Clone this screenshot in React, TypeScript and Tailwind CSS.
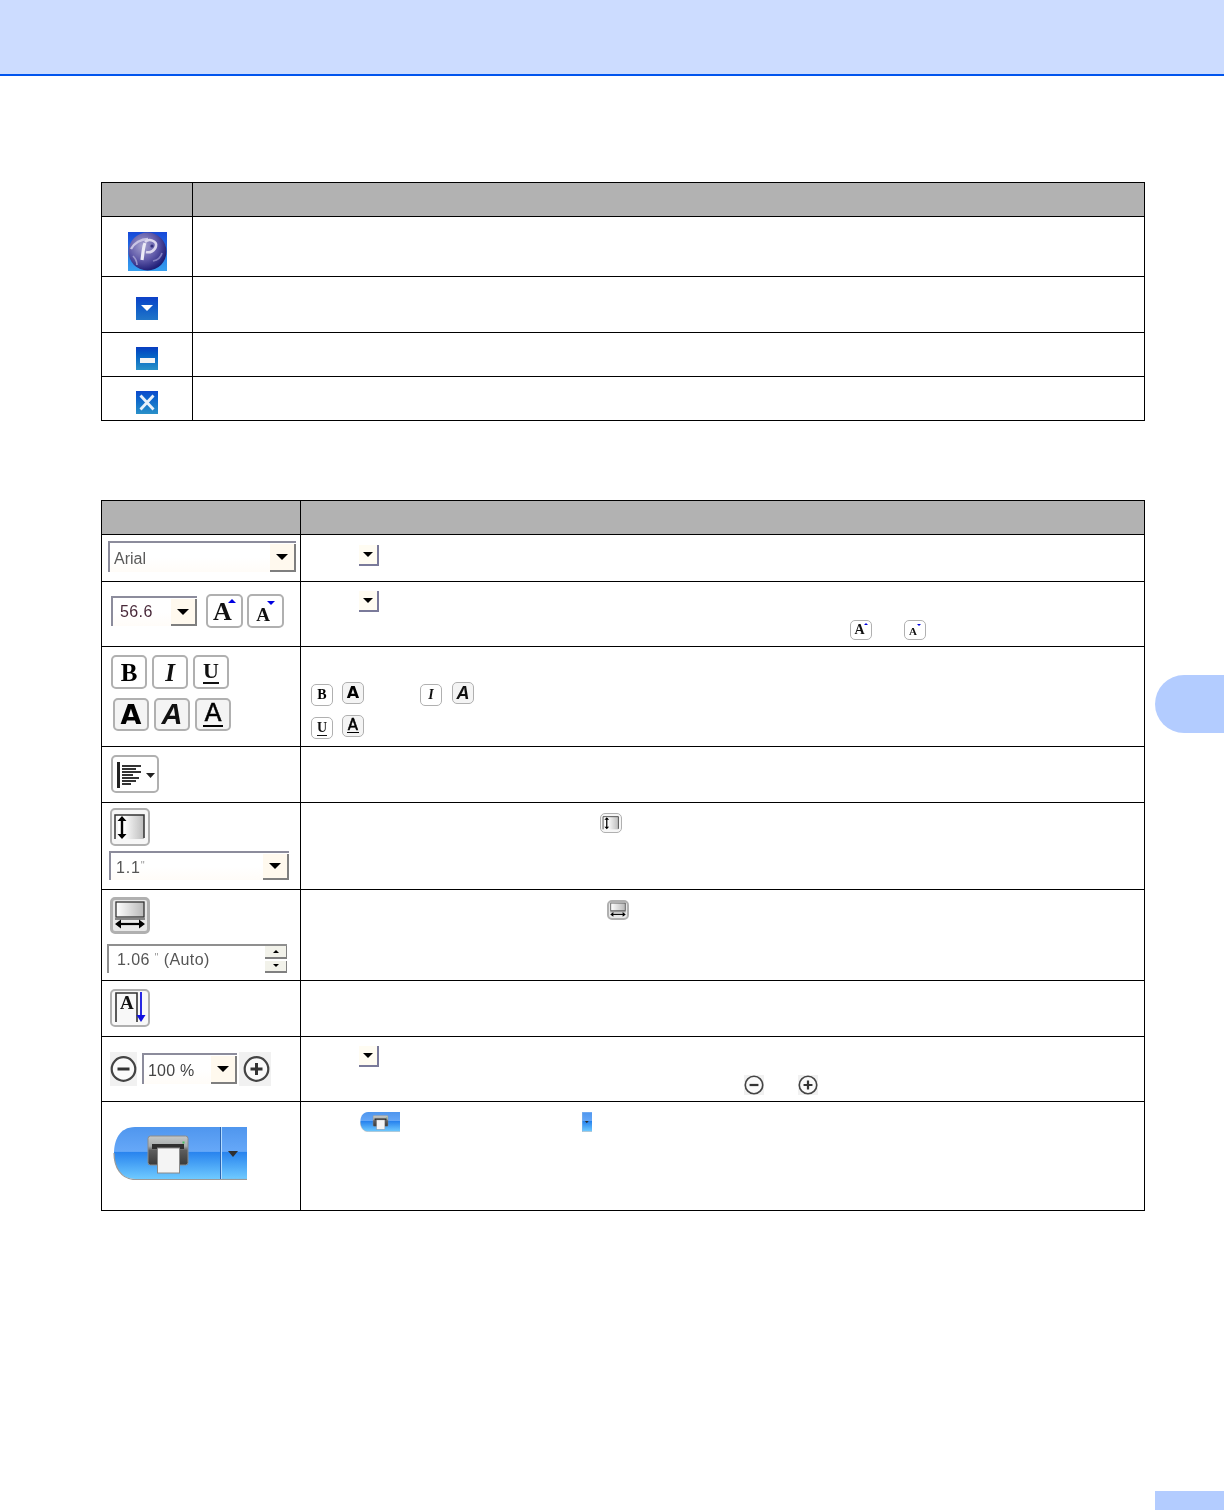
import type { ReactNode } from "react";

const serif = "font-['Liberation_Serif',serif]";
const sans = "font-['Liberation_Sans',sans-serif]";
const dejavu = "font-['DejaVu_Sans',sans-serif]";

function Caret({ className = "border-x-[5px] border-t-[5px] border-t-black" }: { className?: string }) {
	return <span className={`block h-0 w-0 border-x-transparent ${className}`} />;
}

function MiniDrop() {
	return (
		<div className="flex h-[21px] w-[20px] items-center justify-center border-r-2 border-b-2 border-[#7a7a9a] bg-[#fffcf2] blur-[0.3px]">
			<Caret />
		</div>
	);
}

function Combo({ value, className, textClass }: { value: ReactNode; className: string; textClass: string }) {
	return (
		<div className={`flex border-t-2 border-l-2 border-[#8c8c9c] bg-gradient-to-b from-white via-white to-[#fffcf8] blur-[0.35px] ${className}`}>
			<span className={`flex-1 text-[16px] leading-none ${sans} ${textClass}`}>{value}</span>
			<div className="mt-[1px] flex w-[26px] items-center justify-center border-r-2 border-b-2 border-[#7f7f7f] bg-[#fff9ee]">
				<Caret className="border-x-[6px] border-t-[6px] border-t-black" />
			</div>
		</div>
	);
}

function Btn({ className, children }: { className: string; children: ReactNode }) {
	return <div className={`flex items-center justify-center rounded-[5px] border-[#b0b0b0] blur-[0.35px] ${className}`}>{children}</div>;
}

function Bold({ big }: { big?: boolean }) {
	return <span className={`font-bold leading-none text-black ${serif} ${big ? "text-[25px]" : "text-[14px]"}`}>B</span>;
}
function Italic({ big }: { big?: boolean }) {
	return <span className={`font-bold italic leading-none text-[#111] ${serif} ${big ? "text-[25px]" : "text-[14px]"}`}>I</span>;
}
function Under({ big }: { big?: boolean }) {
	return (
		<span className={`font-bold leading-none text-[#111] ${serif} ${big ? "border-b-2 text-[22px]" : "border-b text-[14px]"} border-[#111]`}>U</span>
	);
}
function WideA({ big }: { big?: boolean }) {
	return <span className={`font-bold leading-none text-black ${dejavu} ${big ? "text-[27px]" : "text-[16px]"}`}>A</span>;
}
function SlantA({ big }: { big?: boolean }) {
	return <span className={`font-bold italic leading-none text-[#111] ${sans} ${big ? "text-[29px]" : "text-[18px]"}`}>A</span>;
}
function LineA({ big }: { big?: boolean }) {
	return (
		<span
			className={`leading-[0.9] text-black [-webkit-text-stroke:0.5px_black] ${dejavu} ${big ? "border-b-2 px-[1px] text-[25px]" : "border-b px-[1px] text-[15px]"} border-black`}
		>
			A
		</span>
	);
}

function SizeA({ text, tri }: { text: string; tri: string }) {
	return (
		<div className="flex items-start">
			<span className={`font-bold leading-none text-[#111] ${serif} ${text}`}>A</span>
			<Caret className={tri} />
		</div>
	);
}

function HeightIcon() {
	return (
		<svg viewBox="2 2 36 34" className="h-full w-full">
			<defs>
				<linearGradient id="hg" x1="0" x2="1" y1="0" y2="0">
					<stop offset="0.2" stopColor="#fff" />
					<stop offset="1" stopColor="#bcbcbc" />
				</linearGradient>
			</defs>
			<rect x="8" y="7" width="26" height="24" fill="url(#hg)" />
			<path d="M5 31V7H34V30" fill="none" stroke="#333" strokeWidth="1.5" />
			<path d="M12 10V29" stroke="#000" strokeWidth="2.4" />
			<path d="M7.5 13L12 8L16.5 13ZM7.5 26L12 31L16.5 26Z" fill="#000" />
		</svg>
	);
}

function WidthIcon() {
	return (
		<svg viewBox="3 3 34 31" className="h-full w-full">
			<defs>
				<linearGradient id="wg" x1="0" x2="1" y1="0" y2="0">
					<stop offset="0" stopColor="#fff" />
					<stop offset="1" stopColor="#b8b8b8" />
				</linearGradient>
			</defs>
			<rect x="6" y="5" width="28" height="15" fill="url(#wg)" stroke="#333" strokeWidth="1.3" />
			<path d="M5 22H35" stroke="#444" strokeWidth="1.2" />
			<path d="M9 27H31" stroke="#000" strokeWidth="2.2" />
			<path d="M11 22.5L5 27L11 31.5ZM29 22.5L35 27L29 31.5Z" fill="#000" />
		</svg>
	);
}

function DirectionIcon() {
	return (
		<svg viewBox="2 2 36 34" className="h-full w-full">
			<path d="M6 33V4H27V33" fill="none" stroke="#333" strokeWidth="1.6" />
			<text x="10" y="20" fontFamily="Liberation Serif" fontWeight="700" fontSize="19" fill="#111">
				A
			</text>
			<path d="M31 3V28" stroke="#1010e0" strokeWidth="1.8" />
			<path d="M26.5 26H35.5L31 33Z" fill="#1010e0" />
		</svg>
	);
}

function AlignIcon() {
	return (
		<svg viewBox="2 2 44 34" className="h-full w-full">
			<rect x="6" y="7" width="3" height="26" fill="#222" />
			{[
				[10, 19],
				[13, 14],
				[16, 19],
				[19, 11],
				[22, 17],
				[25, 14],
				[28, 9],
			].map(([y, w]) => (
				<rect key={y} x="11" y={y} width={w} height="2" fill="#333" />
			))}
			<path d="M35 18H44L39.5 23Z" fill="#222" />
		</svg>
	);
}

function RoundIcon({ plus }: { plus?: boolean }) {
	return (
		<svg viewBox="0 0 27 27" className="h-full w-full">
			<circle cx="13.5" cy="13.5" r="11.8" fill="#fafafa" stroke="#444" strokeWidth="2.2" />
			<path d={plus ? "M7.5 13.5H19.5M13.5 7.5V19.5" : "M7.5 13.5H19.5"} stroke="#333" strokeWidth="3" />
		</svg>
	);
}

function PrintLeft({ id }: { id: string }) {
	return (
		<svg viewBox="0 0 107 53" className="h-full w-full blur-[0.3px]">
			<defs>
				<linearGradient id={id} x1="0" x2="0" y1="0" y2="1">
					<stop offset="0" stopColor="#4f96ee" />
					<stop offset="0.47" stopColor="#66a8f8" />
					<stop offset="0.48" stopColor="#2883ee" />
					<stop offset="1" stopColor="#6fcaff" />
				</linearGradient>
				<linearGradient id={`${id}b`} x1="0" x2="0" y1="0" y2="1">
					<stop offset="0" stopColor="#c4c8c8" />
					<stop offset="0.35" stopColor="#a8acac" />
					<stop offset="0.5" stopColor="#5c5c5c" />
					<stop offset="1" stopColor="#3a3a3a" />
				</linearGradient>
			</defs>
			<path d="M107 0H22C6 0 1 14 1 26C1 40 8 52 22 52H107Z" fill={`url(#${id})`} />
			<path d="M107 52.5H22C8 52.5 1 40 1 26" fill="none" stroke="#9a9a9a" strokeWidth="1.2" />
			<rect x="35" y="9" width="40" height="29" rx="2.5" fill={`url(#${id}b)`} stroke="#8c8c8c" />
			<rect x="39" y="17" width="32" height="5" fill="#2f2f2f" />
			<rect x="69.5" y="14.5" width="2" height="2" fill="#45c060" />
			<rect x="44.5" y="21" width="22" height="25" fill="#f4f4f4" stroke="#8a8a8a" />
		</svg>
	);
}

function PrintRight({ id }: { id: string }) {
	return (
		<svg viewBox="0 0 27 53" className="h-full w-full blur-[0.3px]">
			<defs>
				<linearGradient id={id} x1="0" x2="0" y1="0" y2="1">
					<stop offset="0" stopColor="#4f96ee" />
					<stop offset="0.47" stopColor="#66a8f8" />
					<stop offset="0.48" stopColor="#2883ee" />
					<stop offset="1" stopColor="#6fcaff" />
				</linearGradient>
			</defs>
			<rect width="27" height="52" fill={`url(#${id})`} />
			<path d="M0 52.5H27" stroke="#9a9a9a" strokeWidth="1.2" />
			<path d="M0.5 0V52" stroke="#2a64b0" />
			<path d="M1.5 0V52" stroke="#b4dcff" />
			<path d="M8 24H18L13 30Z" fill="#2f2f2f" />
		</svg>
	);
}

function PLogo() {
	return (
		<svg viewBox="0 0 39 39" className="h-[39px] w-[39px] blur-[0.4px]">
			<defs>
				<linearGradient id="pbg" x1="0" x2="0" y1="0" y2="1">
					<stop offset="0" stopColor="#1648d8" />
					<stop offset="1" stopColor="#36a0f0" />
				</linearGradient>
				<radialGradient id="pball" cx="0.38" cy="0.35" r="0.7">
					<stop offset="0" stopColor="#a8a4d0" />
					<stop offset="0.55" stopColor="#5e58a8" />
					<stop offset="0.9" stopColor="#26247c" />
					<stop offset="1" stopColor="#181a6c" />
				</radialGradient>
			</defs>
			<rect width="39" height="39" fill="url(#pbg)" />
			<circle cx="19.5" cy="19.5" r="19" fill="url(#pball)" />
			<path d="M3 17C6 11 13 7 20 7" fill="none" stroke="#c8c4e4" strokeWidth="2.4" />
			<path d="M14 28C15 22 15 16 17 11" fill="none" stroke="#ecebf6" strokeWidth="3.2" />
			<path d="M17 10C21 6 29 9 28 14C27 19 22 21 18 20" fill="none" stroke="#dcd8ee" strokeWidth="2.6" />
			<circle cx="24" cy="14" r="1.6" fill="#34307c" />
			<path d="M5 24C8 27 9 30 9 33" fill="none" stroke="#9c98cc" strokeWidth="1.6" />
			<path d="M25 29C30 28 33 25 34 21" fill="none" stroke="#8480c0" strokeWidth="1.6" />
		</svg>
	);
}

function WinBtn({ children, className }: { children: ReactNode; className: string }) {
	return <div className={`flex h-[23px] w-[22px] items-center justify-center bg-gradient-to-b blur-[0.3px] ${className}`}>{children}</div>;
}

function Row({ left, right, className, colClass }: { left?: ReactNode; right?: ReactNode; className: string; colClass: string }) {
	return (
		<div className={`flex border-black ${className}`}>
			<div className={`shrink-0 border-r border-black ${colClass}`}>{left}</div>
			<div className="flex-1">{right}</div>
		</div>
	);
}

export default function App() {
	const c1 = "w-[91px] flex items-center justify-center";
	const c2 = "w-[199px]";

	return (
		<div className="flex h-[1510px] flex-col overflow-hidden bg-white">
			<div className="h-[76px] shrink-0 border-b-2 border-[#0055ee] bg-[#ccdcff]" />

			<div className="flex flex-1">
				<div className="w-[1155px] shrink-0 pt-[106px] pl-[101px]">
					{/* window buttons */}
					<div className="w-[1044px] border border-black">
						<Row className="h-[34px] border-b bg-[#b2b2b2]" colClass="w-[91px]" />
						<Row className="h-[60px] border-b" colClass={`${c1} pt-[9px]`} left={<PLogo />} />
						<Row
							className="h-[56px] border-b"
							colClass={`${c1} pt-[7px]`}
							left={
								<WinBtn className="from-[#0e40c8] to-[#2276c8]">
									<Caret className="border-x-[6px] border-t-[6px] border-t-white" />
								</WinBtn>
							}
						/>
						<Row
							className="h-[44px] border-b"
							colClass={`${c1} pt-[7px]`}
							left={
								<WinBtn className="from-[#0a3cc0] to-[#2a92c8]">
									<span className="mt-[5px] block h-[5px] w-[15px] bg-[#f4f4f4]" />
								</WinBtn>
							}
						/>
						<Row
							className="h-[43px]"
							colClass={`${c1} pt-[7px]`}
							left={
								<WinBtn className="from-[#0e48cc] to-[#2a90c8]">
									<svg viewBox="0 0 22 23" className="h-full w-full">
										<path d="M4.5 4.5L17.5 18.5M17.5 4.5L4.5 18.5" stroke="#e8f0fa" strokeWidth="2.8" />
									</svg>
								</WinBtn>
							}
						/>
					</div>

					{/* toolbar */}
					<div className="mt-[79px] w-[1044px] border border-black">
						<Row className="h-[34px] border-b bg-[#b2b2b2]" colClass="w-[199px]" />

						<Row
							className="h-[47px] border-b"
							colClass={`${c2} pt-[6px] pl-[6px]`}
							left={<Combo value="Arial" className="h-[31px] w-[188px]" textClass="pt-[8px] pl-[4px] text-[#5a5a5a]" />}
							right={
								<div className="pt-[10px] pl-[58px]">
									<MiniDrop />
								</div>
							}
						/>

						<Row
							className="h-[65px] border-b"
							colClass={`${c2} flex items-start pt-[12px] pl-[9px]`}
							left={
								<>
									<Combo
										value="56.6"
										className="mt-[2px] h-[30px] w-[86px]"
										textClass="pt-[6px] pl-[7px] tracking-[0.4px] text-[#4a2a3a]"
									/>
									<Btn className="ml-[9px] h-[34px] w-[37px] border-2 bg-white">
										<SizeA text="mt-[2px] text-[26px]" tri="-ml-[4px] mt-[2px] border-x-[4px] border-b-[4px] border-b-[#0000e0]" />
									</Btn>
									<Btn className="ml-[4px] h-[34px] w-[37px] border-2 bg-white">
										<SizeA text="mt-[6px] text-[19px]" tri="-ml-[3px] mt-[2px] border-x-[4px] border-t-[4px] border-t-[#0000e0]" />
									</Btn>
								</>
							}
							right={
								<div className="pt-[9px] pl-[58px]">
									<MiniDrop />
									<div className="mt-[8px] ml-[491px] flex gap-[32px]">
										<Btn className="h-[20px] w-[22px] border bg-white">
											<SizeA text="text-[14px]" tri="-ml-[1px] border-x-[2px] border-b-[2px] border-b-[#0000e0]" />
										</Btn>
										<Btn className="h-[20px] w-[22px] border bg-white">
											<SizeA text="mt-[2px] text-[11px]" tri="border-x-[2px] border-t-[2px] border-t-[#0000e0]" />
										</Btn>
									</div>
								</div>
							}
						/>

						<Row
							className="h-[100px] border-b"
							colClass={`${c2} pt-[8px] pl-[9px]`}
							left={
								<>
									<div className="flex gap-[5px]">
										<Btn className="h-[34px] w-[36px] border-2 bg-white">
											<Bold big />
										</Btn>
										<Btn className="h-[34px] w-[36px] border-2 bg-white">
											<Italic big />
										</Btn>
										<Btn className="h-[34px] w-[36px] border-2 bg-white">
											<Under big />
										</Btn>
									</div>
									<div className="mt-[9px] ml-[2px] flex gap-[5px]">
										<Btn className="h-[33px] w-[36px] border-2 bg-[#f4f4f4]">
											<WideA big />
										</Btn>
										<Btn className="h-[33px] w-[36px] border-2 bg-[#f4f4f4]">
											<SlantA big />
										</Btn>
										<Btn className="h-[33px] w-[36px] border-2 bg-[#f4f4f4]">
											<LineA big />
										</Btn>
									</div>
								</>
							}
							right={
								<div className="pt-[35px] pl-[10px]">
									<div className="flex items-start">
										<Btn className="mt-[2px] h-[22px] w-[22px] border bg-white">
											<Bold />
										</Btn>
										<Btn className="ml-[9px] h-[22px] w-[22px] border bg-[#f4f4f4]">
											<WideA />
										</Btn>
										<Btn className="mt-[2px] ml-[56px] h-[22px] w-[22px] border bg-white">
											<Italic />
										</Btn>
										<Btn className="ml-[10px] h-[22px] w-[22px] border bg-[#f4f4f4]">
											<SlantA />
										</Btn>
									</div>
									<div className="mt-[9px] flex items-start">
										<Btn className="mt-[2px] h-[22px] w-[22px] border bg-white">
											<Under />
										</Btn>
										<Btn className="ml-[9px] h-[22px] w-[22px] border bg-[#f4f4f4]">
											<LineA />
										</Btn>
									</div>
								</div>
							}
						/>

						<Row
							className="h-[56px] border-b"
							colClass={`${c2} pt-[8px] pl-[9px]`}
							left={
								<Btn className="h-[38px] w-[48px] border-2 bg-white">
									<AlignIcon />
								</Btn>
							}
						/>

						<Row
							className="h-[87px] border-b"
							colClass={`${c2} pt-[5px] pl-[8px]`}
							left={
								<>
									<Btn className="h-[38px] w-[40px] border-2 bg-[#f6f6f6]">
										<HeightIcon />
									</Btn>
									<Combo
										value={
											<>
												1.1<span className="align-top text-[11px] text-[#999]">"</span>
											</>
										}
										className="mt-[5px] -ml-[1px] h-[29px] w-[180px]"
										textClass="pt-[7px] pl-[5px] tracking-[0.8px] text-[#555]"
									/>
								</>
							}
							right={
								<div className="pt-[10px] pl-[299px]">
									<Btn className="h-[20px] w-[22px] border bg-[#f6f6f6]">
										<HeightIcon />
									</Btn>
								</div>
							}
						/>

						<Row
							className="h-[91px] border-b"
							colClass={`${c2} pt-[7px] pl-[8px]`}
							left={
								<>
									<Btn className="h-[37px] w-[40px] border-[3px] border-[#5c5c5c] bg-[#e8e8e8]">
										<WidthIcon />
									</Btn>
									<div className="mt-[10px] -ml-[3px] flex h-[29px] w-[180px] border-t-2 border-l-2 border-[#8f8f8f] bg-white blur-[0.35px]">
										<span className={`flex-1 pt-[6px] pl-[8px] text-[16px] leading-none tracking-[0.4px] text-[#555] ${sans}`}>
											1.06 <span className="align-top text-[11px] text-[#999]">"</span> (Auto)
										</span>
										<div className="flex w-[22px] flex-col gap-[2px]">
											<div className="flex flex-1 items-center justify-center border-r border-b-2 border-[#808080] bg-[#f2f2ea]">
												<Caret className="border-x-[3px] border-b-[3px] border-b-black" />
											</div>
											<div className="flex flex-1 items-center justify-center border-r border-b-2 border-[#808080] bg-[#f2f2ea]">
												<Caret className="border-x-[3px] border-t-[3px] border-t-black" />
											</div>
										</div>
									</div>
								</>
							}
							right={
								<div className="pt-[10px] pl-[306px]">
									<Btn className="h-[20px] w-[22px] border-2 border-[#5c5c5c] bg-[#e8e8e8]">
										<WidthIcon />
									</Btn>
								</div>
							}
						/>

						<Row
							className="h-[56px] border-b"
							colClass={`${c2} pt-[8px] pl-[8px]`}
							left={
								<Btn className="h-[38px] w-[40px] border-2 bg-[#f8f8f8]">
									<DirectionIcon />
								</Btn>
							}
						/>

						<Row
							className="h-[65px] border-b"
							colClass={`${c2} flex items-start pt-[15px] pl-[8px]`}
							left={
								<>
									<div className="flex h-[34px] w-[27px] items-center bg-[#f1f1f1] blur-[0.3px]">
										<RoundIcon />
									</div>
									<Combo
										value="100 %"
										className="mt-[1px] ml-[5px] h-[31px] w-[95px]"
										textClass="pt-[8px] pl-[4px] tracking-[0.2px] text-[#444]"
									/>
									<div className="ml-[2px] flex h-[34px] w-[32px] items-center bg-[#f1f1f1] pr-[1px] pl-[4px] blur-[0.3px]">
										<RoundIcon plus />
									</div>
								</>
							}
							right={
								<div className="pt-[9px] pl-[58px]">
									<MiniDrop />
									<div className="mt-[8px] ml-[385px] flex gap-[34px]">
										<div className="h-[20px] w-[20px] bg-[#f1f1f1]">
											<RoundIcon />
										</div>
										<div className="h-[20px] w-[20px] bg-[#f1f1f1]">
											<RoundIcon plus />
										</div>
									</div>
								</div>
							}
						/>

						<Row
							className="h-[108px]"
							colClass={`${c2} pt-[25px] pl-[11px]`}
							left={
								<div className="flex h-[53px]">
									<div className="w-[107px]">
										<PrintLeft id="pl1" />
									</div>
									<div className="w-[27px]">
										<PrintRight id="pr1" />
									</div>
								</div>
							}
							right={
								<div className="flex pt-[10px] pl-[59px]">
									<div className="h-[20px] w-[40px]">
										<PrintLeft id="pl2" />
									</div>
									<div className="ml-[182px] h-[20px] w-[10px]">
										<PrintRight id="pr2" />
									</div>
								</div>
							}
						/>
					</div>
				</div>

				{/* side tabs */}
				<div className="flex flex-1 flex-col pt-[599px]">
					<div className="h-[58px] rounded-l-[29px] bg-[#b3ccff]" />
					<div className="mt-auto h-[19px] bg-[#b3ccff]" />
				</div>
			</div>
		</div>
	);
}
